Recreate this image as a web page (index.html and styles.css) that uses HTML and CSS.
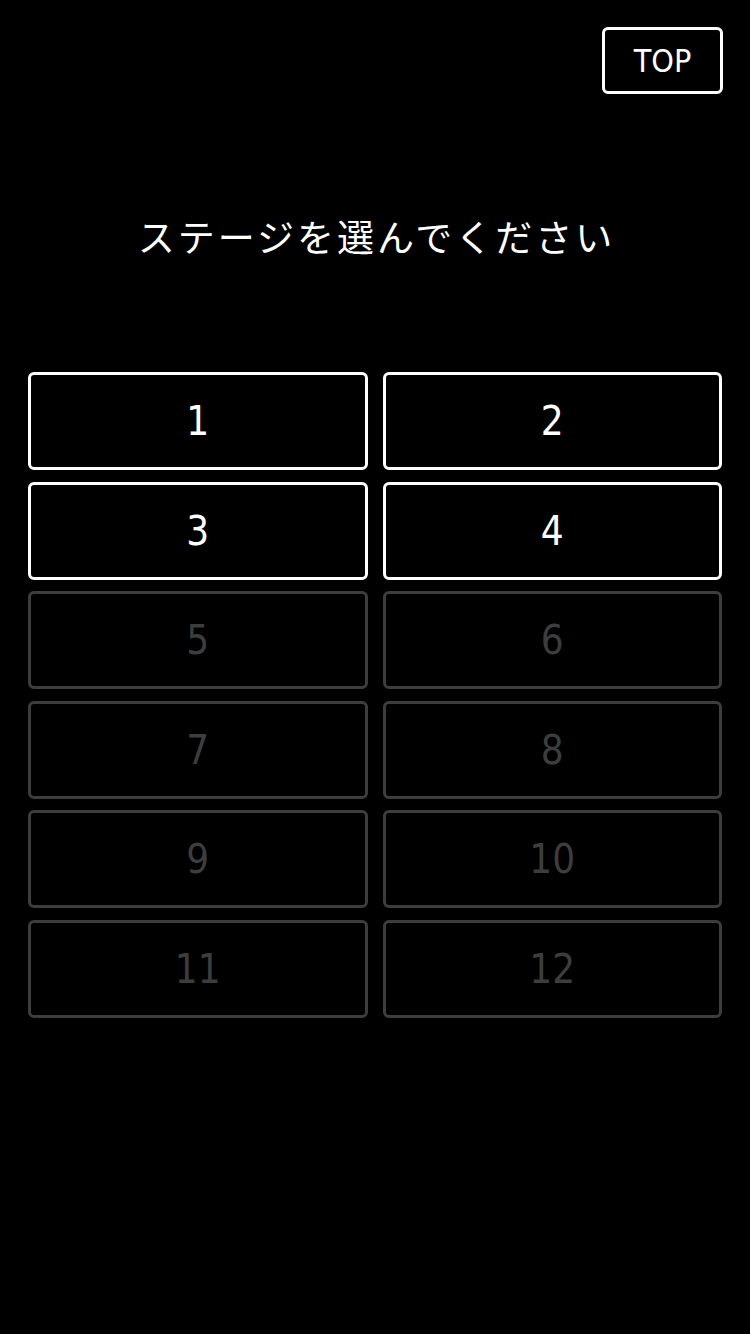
FILE: index.html
```html
<!DOCTYPE html>
<html lang="ja">
<head>
<meta charset="utf-8">
<title>ステージ選択</title>
<link rel="stylesheet" href="styles.css">
</head>
<body>
<div class="screen">
  <div class="top-bar">
    <div class="top-btn">TOP</div>
  </div>
  <h1 class="title">ステージを選んでください</h1>
  <div class="stage-grid">
    <div class="stage active">1</div>
    <div class="stage active">2</div>
    <div class="stage active">3</div>
    <div class="stage active">4</div>
    <div class="stage locked">5</div>
    <div class="stage locked">6</div>
    <div class="stage locked">7</div>
    <div class="stage locked">8</div>
    <div class="stage locked">9</div>
    <div class="stage locked">10</div>
    <div class="stage locked">11</div>
    <div class="stage locked">12</div>
  </div>
</div>
</body>
</html>
```

FILE: styles.css
```css
html, body {
  margin: 0;
  padding: 0;
  background: #000;
}
.screen {
  width: 750px;
  min-height: 1334px;
  background: #000;
  color: #fff;
  font-family: "DejaVu Sans Condensed", "DejaVu Sans", "Noto Sans CJK JP", sans-serif;
  font-stretch: condensed;
}
.top-bar {
  display: flex;
  justify-content: flex-end;
  padding: 27px 27px 0 0;
}
.top-btn {
  box-sizing: border-box;
  width: 121px;
  height: 67px;
  border: 3px solid #fff;
  border-radius: 6px;
  display: flex;
  align-items: center;
  justify-content: center;
  font-size: 32px;
  font-weight: 200;
  line-height: 1;
  color: #fff;
}
.title {
  margin: 122px 0 0;
  text-align: center;
  font-family: "Noto Sans CJK JP", sans-serif;
  font-stretch: normal;
  font-weight: 400;
  font-size: 37px;
  line-height: 40px;
  letter-spacing: 3px;
  text-indent: 3px;
  color: #fff;
}
.stage-grid {
  margin: 116px 28px 0;
  display: grid;
  grid-template-columns: 1fr 1fr;
  column-gap: 15px;
  row-gap: 11.5px;
}
.stage {
  box-sizing: border-box;
  height: 98px;
  border: 3px solid #fff;
  border-radius: 6px;
  display: flex;
  align-items: center;
  justify-content: center;
  font-size: 40px;
  font-weight: 200;
  line-height: 1;
}
.stage.active {
  border-color: #fff;
  color: #fff;
}
.stage.locked {
  border-color: #3d3d3d;
  color: #3d3d3d;
}
```
